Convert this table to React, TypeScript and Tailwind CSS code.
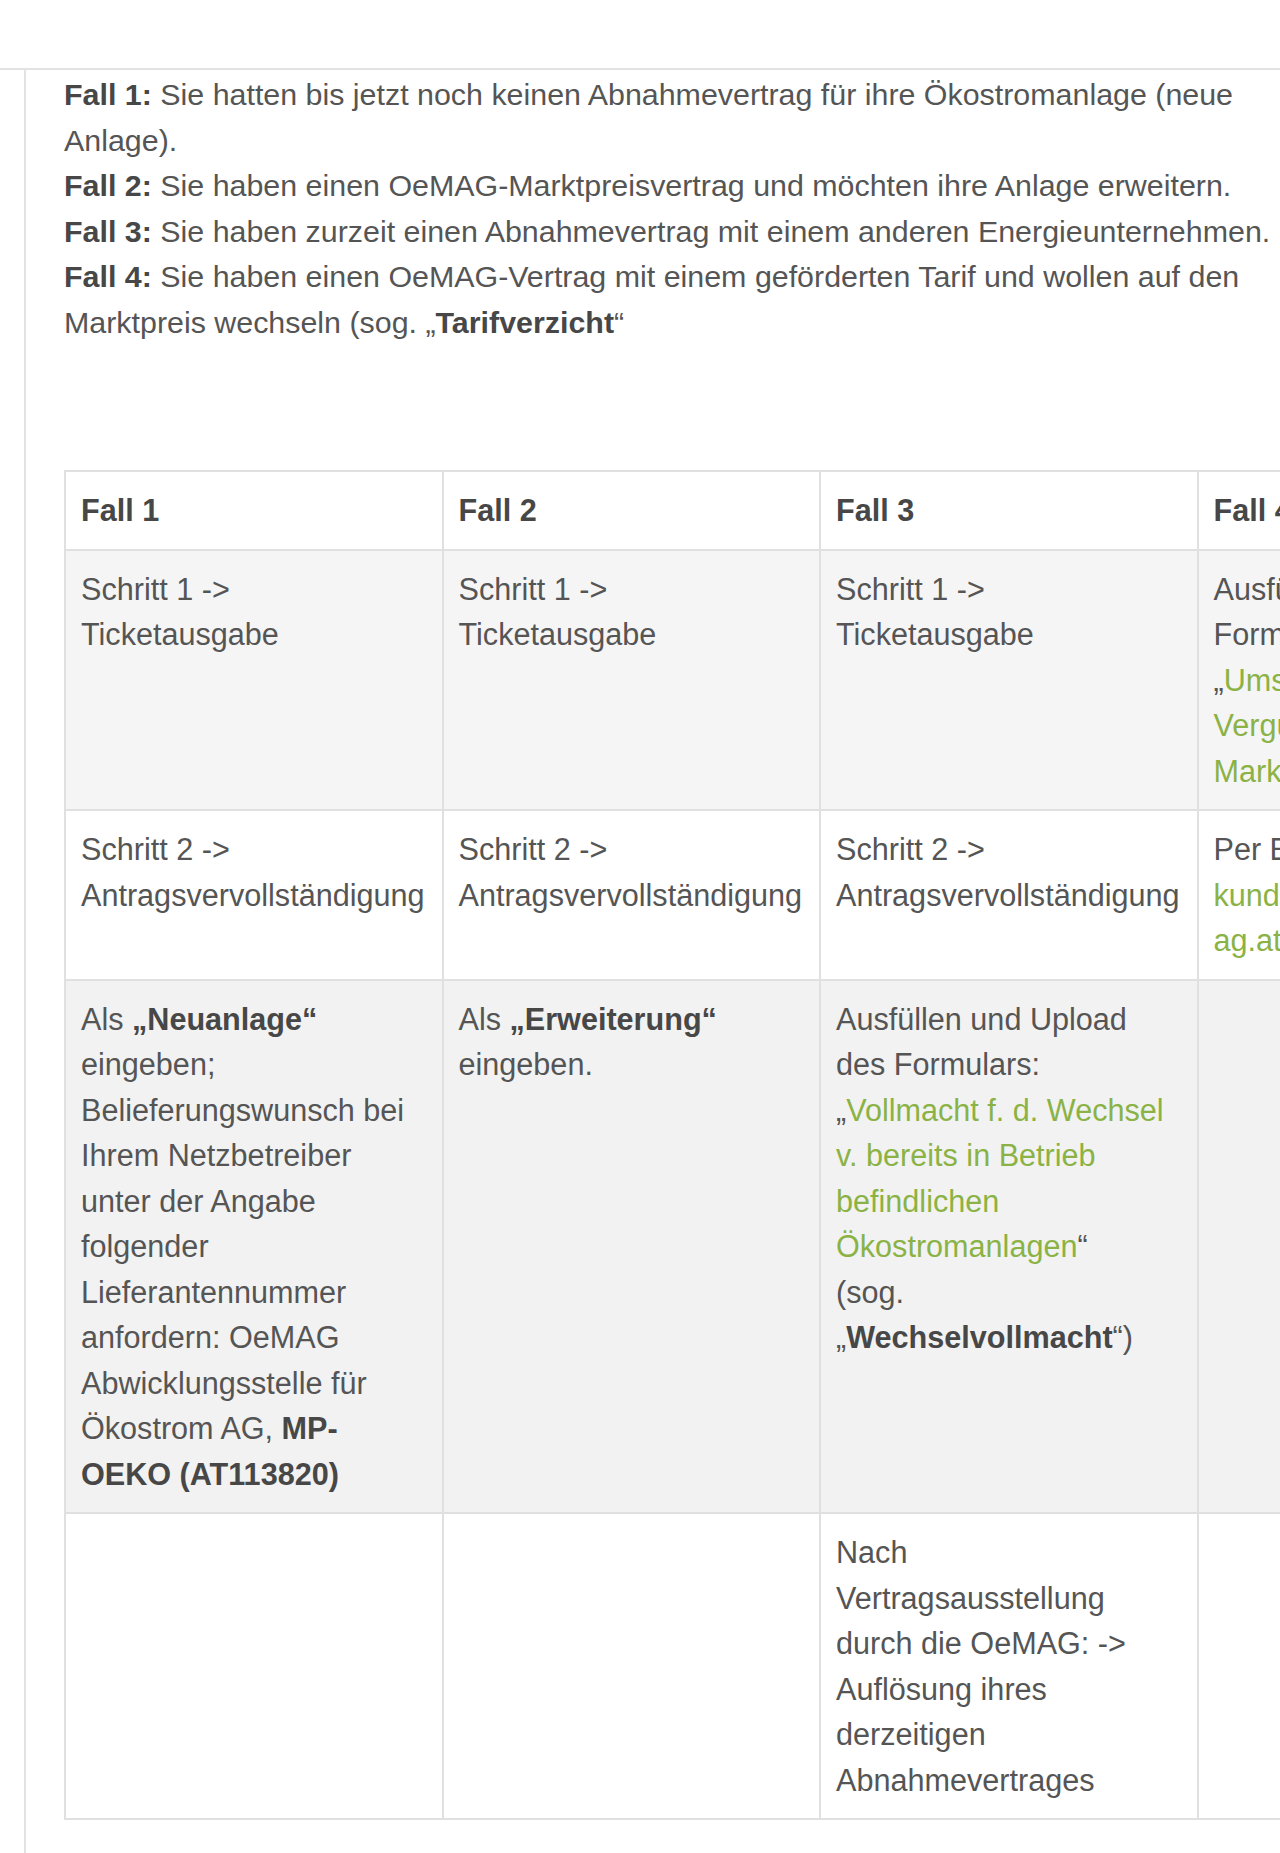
import React from "react";

const Link = ({ children }: { children: React.ReactNode }) => (
  <span className="text-[#8bb245]">{children}</span>
);

const B = ({ children }: { children: React.ReactNode }) => (
  <b className="font-bold text-[#474747]">{children}</b>
);

const Cell = ({ children }: { children?: React.ReactNode }) => (
  <td className="border-2 border-[#e0e0e0] pt-4 pb-[15px] pl-[15px] pr-4 align-top">{children}</td>
);

const Head = ({ children }: { children: React.ReactNode }) => (
  <th className="border-2 border-[#e0e0e0] pt-4 pb-[15px] pl-[15px] pr-4 font-bold text-[#474747]">{children}</th>
);

export default function App() {
  return (
    <div className="h-[1853px] w-[1280px] overflow-hidden bg-white font-['Liberation_Sans',Arial,sans-serif] text-[30.6px] leading-[45.5px] text-[#555555]">
      <div className="h-[68px]" />
      <div className="border-t-2 border-[#e2e2e2]">
        <div className="ml-[24px] h-[1785px] border-l-2 border-[#e2e2e2] pl-[38px] pt-[2px]">
          <p className="whitespace-nowrap text-[30.4px]">
            <B>Fall 1:</B> Sie hatten bis jetzt noch keinen Abnahmevertrag für ihre Ökostromanlage (neue
            <br />
            Anlage).
            <br />
            <B>Fall 2:</B> Sie haben einen OeMAG-Marktpreisvertrag und möchten ihre Anlage erweitern.
            <br />
            <B>Fall 3:</B> Sie haben zurzeit einen Abnahmevertrag mit einem anderen Energieunternehmen.
            <br />
            <B>Fall 4:</B> Sie haben einen OeMAG-Vertrag mit einem geförderten Tarif und wollen auf den
            <br />
            Marktpreis wechseln (sog. „<B>Tarifverzicht</B>“
          </p>

          <div className="mt-[125px] overflow-hidden">
            <table className="w-[1512px] table-fixed border-collapse text-left">
              <thead>
                <tr className="bg-white">
                  <Head>Fall 1</Head>
                  <Head>Fall 2</Head>
                  <Head>Fall 3</Head>
                  <Head>Fall 4</Head>
                </tr>
              </thead>
              <tbody>
                <tr className="bg-[#f5f5f5]">
                  <Cell>
                    Schritt 1 -&gt;
                    <br />
                    Ticketausgabe
                  </Cell>
                  <Cell>
                    Schritt 1 -&gt;
                    <br />
                    Ticketausgabe
                  </Cell>
                  <Cell>
                    Schritt 1 -&gt;
                    <br />
                    Ticketausgabe
                  </Cell>
                  <Cell>
                    Ausfüllen des
                    <br />
                    Formulars:
                    <br />„<Link>Umstellung der</Link>
                    <br />
                    <Link>Vergütung auf</Link>
                    <br />
                    <Link>Marktpreis</Link>“
                  </Cell>
                </tr>
                <tr className="bg-white">
                  <Cell>
                    Schritt 2 -&gt;
                    <br />
                    Antragsvervollständigung
                  </Cell>
                  <Cell>
                    Schritt 2 -&gt;
                    <br />
                    Antragsvervollständigung
                  </Cell>
                  <Cell>
                    Schritt 2 -&gt;
                    <br />
                    Antragsvervollständigung
                  </Cell>
                  <Cell>
                    Per E-Mail an
                    <br />
                    <Link>
                      kundenservice@oem-
                      <br />
                      ag.at
                    </Link>
                  </Cell>
                </tr>
                <tr className="bg-[#f2f2f2]">
                  <Cell>
                    Als <B>„Neuanlage“</B>
                    <br />
                    eingeben;
                    <br />
                    Belieferungswunsch bei
                    <br />
                    Ihrem Netzbetreiber
                    <br />
                    unter der Angabe
                    <br />
                    folgender
                    <br />
                    Lieferantennummer
                    <br />
                    anfordern: OeMAG
                    <br />
                    Abwicklungsstelle für
                    <br />
                    Ökostrom AG, <B>MP-</B>
                    <br />
                    <B>OEKO (AT113820)</B>
                  </Cell>
                  <Cell>
                    Als <B>„Erweiterung“</B>
                    <br />
                    eingeben.
                  </Cell>
                  <Cell>
                    Ausfüllen und Upload
                    <br />
                    des Formulars:
                    <br />„<Link>Vollmacht f. d. Wechsel</Link>
                    <br />
                    <Link>v. bereits in Betrieb</Link>
                    <br />
                    <Link>befindlichen</Link>
                    <br />
                    <Link>Ökostromanlagen</Link>“
                    <br />
                    (sog.
                    <br />„<B>Wechselvollmacht</B>“)
                  </Cell>
                  <Cell />
                </tr>
                <tr className="bg-white">
                  <Cell />
                  <Cell />
                  <Cell>
                    Nach
                    <br />
                    Vertragsausstellung
                    <br />
                    durch die OeMAG: -&gt;
                    <br />
                    Auflösung ihres
                    <br />
                    derzeitigen
                    <br />
                    Abnahmevertrages
                  </Cell>
                  <Cell />
                </tr>
              </tbody>
            </table>
          </div>
        </div>
      </div>
    </div>
  );
}
